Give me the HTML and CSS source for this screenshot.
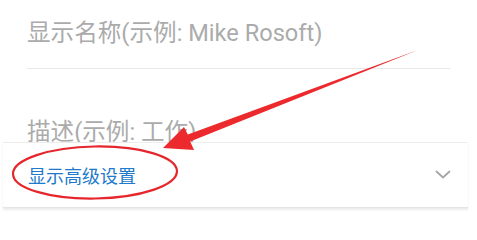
FILE: index.html
```html
<!DOCTYPE html>
<html lang="zh-CN">
<head>
<meta charset="utf-8">
<link rel="stylesheet" href="styles.css">
</head>
<body>
<div class="page">
  <div class="field field-name">
    <span class="placeholder">显示名称(示例: Mike Rosoft)</span>
  </div>
  <div class="field field-desc">
    <span class="placeholder">描述(示例: 工作)</span>
  </div>
  <div class="card">
    <span class="advanced">显示高级设置</span>
    <svg class="chevron" width="16" height="10" viewBox="0 0 16 10">
      <path d="M1.5 1.5 L8 7.5 L14.5 1.5" fill="none" stroke="#a6a6a6" stroke-width="1.8" stroke-linecap="round" stroke-linejoin="round"/>
    </svg>
  </div>
  <svg class="annot" width="477" height="234" viewBox="0 0 477 234">
    <ellipse cx="95" cy="172.5" rx="82" ry="26" fill="none" stroke="#e5262c" stroke-width="2.2" transform="rotate(-1 95 172.5)"/>
    <polygon points="163,148 184,127 187.8,134.6 418,50 190.2,141.5 194,150" fill="#ec2a2e"/>
  </svg>
</div>
</body>
</html>
```

FILE: styles.css
```css
html, body {
  margin: 0;
  padding: 0;
  background: #ffffff;
}

.page {
  position: relative;
  width: 477px;
  height: 234px;
  overflow: hidden;
  font-family: Roboto, "Noto Sans CJK SC", sans-serif;
}

.placeholder {
  font-size: 23.6px;
  color: #ababab;
  white-space: nowrap;
}

.field {
  margin: 0 27px;
  line-height: 28px;
}

.field-name {
  padding-top: 19px;
  padding-bottom: 18px;
  border-bottom: 1px solid #e8e8e8;
}

.field-desc {
  height: 73px;
  padding-top: 49px;
  box-sizing: border-box;
  overflow: hidden;
}

.card {
  margin: 0 9px 0 3px;
  height: 66px;
  box-sizing: border-box;
  border-top: 1px solid #ececec;
  border-bottom: 1px solid #e4e4e4;
  box-shadow: 0 2px 2px rgba(0, 0, 0, 0.08);
  display: flex;
  align-items: center;
  justify-content: space-between;
  padding: 0 17px 0 25px;
  background: #ffffff;
}

.advanced {
  font-size: 18px;
  color: #2079c9;
}

.chevron {
  display: block;
}

.annot {
  position: absolute;
  left: 0;
  top: 0;
  pointer-events: none;
}
```
